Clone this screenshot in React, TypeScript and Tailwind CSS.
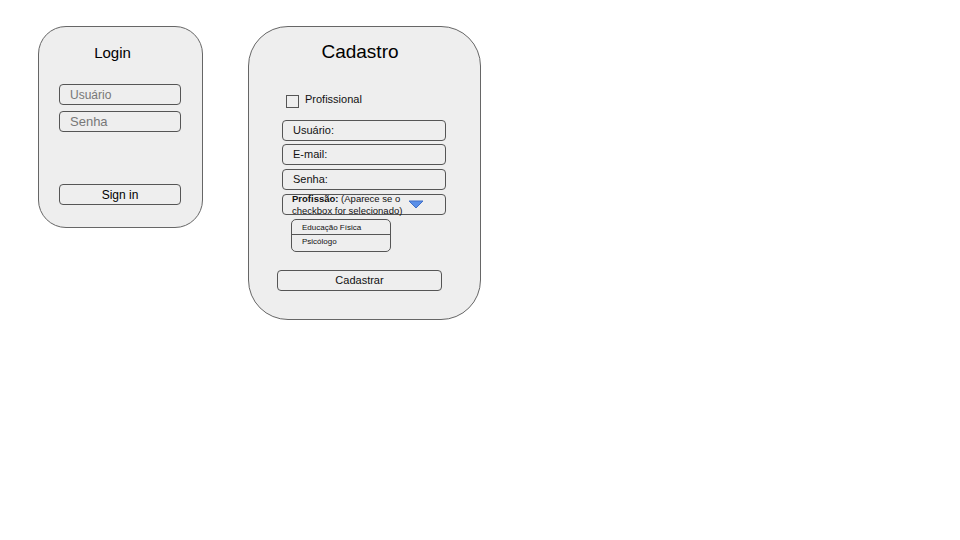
import React from 'react';

const font = { fontFamily: '"Liberation Sans", Arial, sans-serif' };

const Field: React.FC<{ label: string }> = ({ label }) => (
  <div className="h-[21px] w-[164px] rounded-[4px] border border-[#555] flex items-center pl-[10px] text-[11px] text-[#111]">
    {label}
  </div>
);

export default function App() {
  return (
    <div className="w-[960px] h-[540px] bg-white flex items-start pl-[38px] pt-[26px] gap-[45px]" style={font}>
      {/* Login card */}
      <div className="w-[165px] h-[202px] rounded-[28px] border border-[#666] bg-[#eeeeee] flex flex-col px-[20px]">
        <div className="mt-[17px] h-[18px] leading-[18px] text-[15px] text-black text-center pr-[16px]">Login</div>
        <div className="mt-[22px] h-[21px] w-[122px] rounded-[4px] border border-[#555] flex items-center pl-[10px] text-[12px] text-[#777]">
          Usuário
        </div>
        <div className="mt-[6px] h-[21px] w-[122px] rounded-[4px] border border-[#555] flex items-center pl-[10px] text-[13px] text-[#777]">
          Senha
        </div>
        <div className="mt-[52px] h-[21px] w-[122px] rounded-[4px] border border-[#555] flex items-center justify-center text-[12px] text-black">
          Sign in
        </div>
      </div>

      {/* Cadastro card */}
      <div className="w-[233px] h-[294px] rounded-[40px] border border-[#666] bg-[#eeeeee] flex flex-col">
        <div className="mt-[14px] h-[22px] leading-[22px] text-[19px] text-black text-center pr-[9px]">Cadastro</div>
        <div className="mt-[31px] ml-[37px] h-[13px] flex items-center gap-[6px]">
          <div className="w-[13px] h-[13px] border border-[#555] bg-[#eeeeee] mt-[2px]" />
          <span className="text-[11px] text-[#111] -mt-[3px]">Profissional</span>
        </div>
        <div className="mt-[13px] ml-[33px] flex flex-col">
          <Field label="Usuário:" />
          <div className="mt-[3px]"><Field label="E-mail:" /></div>
          <div className="mt-[4px]"><Field label="Senha:" /></div>
          <div className="mt-[4px] h-[21px] w-[164px] rounded-[4px] border border-[#555] flex items-start pl-[9px] text-[9.5px] text-[#111] relative">
            <div className="-mt-[2px] leading-[12px]">
              <b>Profissão:</b> (Aparece se o<br />checkbox for selecionado)
            </div>
            <svg className="absolute left-[125px] top-[5px]" width="16" height="9" viewBox="0 0 16 9">
              <polygon points="1,1 15,1 8,8" fill="#5a8fe8" stroke="#3f6fc8" strokeWidth="1" strokeLinejoin="round" />
            </svg>
          </div>
          <div className="mt-[4px] ml-[9px] w-[100px] h-[33px] rounded-[5px] border border-[#555] flex flex-col text-[8px] text-[#111]">
            <div className="h-[15px] flex items-center pl-[10px] border-b border-[#555] pt-[2px]">Educação Física</div>
            <div className="h-[14px] flex items-center pl-[10px]">Psicólogo</div>
          </div>
        </div>
        <div className="mt-[18px] ml-[28px] h-[21px] w-[165px] rounded-[4px] border border-[#555] flex items-center justify-center text-[11px] text-[#111]">
          Cadastrar
        </div>
      </div>
    </div>
  );
}
